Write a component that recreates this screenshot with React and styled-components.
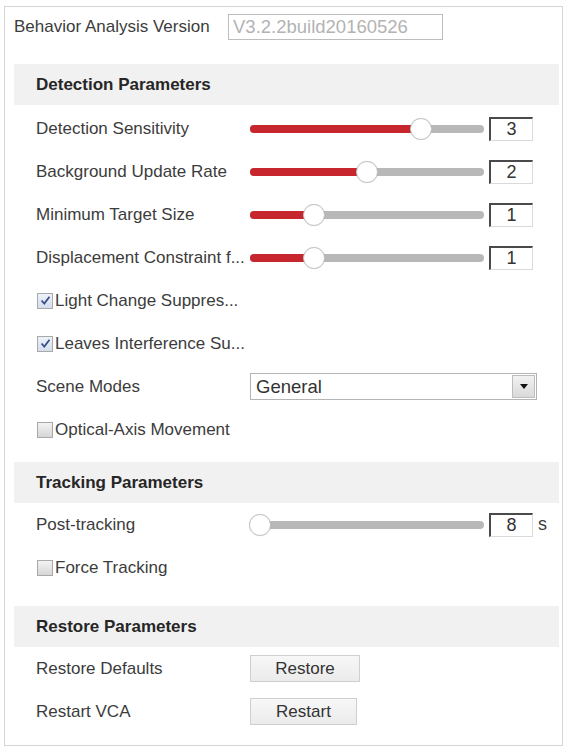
import React from "react";
import styled, { createGlobalStyle } from "styled-components";

const GlobalStyle = createGlobalStyle`
  html, body {
    margin: 0;
    padding: 0;
    background: #ffffff;
  }
  body {
    font-family: "Liberation Sans", Arial, sans-serif;
    color: #3c3c3c;
  }
`;

const Panel = styled.div`
  margin: 6px 0 0 4px;
  width: 545px;
  height: 738px;
  border: 1px solid #d6d6d6;
  padding-left: 9px;
  padding-right: 3px;
  display: flex;
  flex-direction: column;
`;

/* Version */

const VersionRow = styled.div`
  display: flex;
  align-items: center;
  height: 26px;
  margin-top: 7px;
`;

const VersionLabel = styled.span`
  font-size: 17px;
  width: 214px;
`;

const VersionInput = styled.div`
  width: 209px;
  height: 24px;
  border: 1px solid #bdbdbd;
  padding-left: 4px;
  font-size: 18.5px;
  line-height: 24px;
  color: #b3b3b3;
`;

/* Sections */

const Section = styled.section`
  margin-top: ${(p) => p.$top}px;
  display: flex;
  flex-direction: column;
`;

const SectionHeader = styled.h3`
  margin: 0;
  height: 41px;
  background: #f1f1f1;
  padding-left: 22px;
  display: flex;
  align-items: center;
  font-size: 17px;
  font-weight: bold;
  color: #262626;
`;

const Rows = styled.div`
  margin-top: ${(p) => p.$top || 0}px;
  display: flex;
  flex-direction: column;
`;

const Row = styled.div`
  height: 43px;
  display: flex;
  align-items: center;
  padding-left: 22px;
  font-size: 17px;
`;

const Label = styled.span`
  width: 214px;
  flex-shrink: 0;
  white-space: nowrap;
  overflow: hidden;
`;

/* Slider */

const Track = styled.div`
  position: relative;
  width: 234px;
  height: 8px;
  border-radius: 4px;
  background: #b8b8b8;
`;

const Fill = styled.div`
  height: 100%;
  border-radius: 4px 0 0 4px;
  background: #c7262f;
`;

const Thumb = styled.div`
  position: absolute;
  top: 50%;
  width: 20px;
  height: 20px;
  margin: -11px 0 0 -11px;
  border-radius: 50%;
  background: #ffffff;
  border: 1px solid #c4c4c4;
  box-shadow: 0 0 1px rgba(0, 0, 0, 0.15);
`;

const NumberBox = styled.div`
  margin-left: 5px;
  width: 41px;
  height: 21px;
  border: 1px solid #dadada;
  border-top: 2px solid #4a4a4a;
  border-left: 2px solid #4a4a4a;
  font-size: 18px;
  line-height: 21px;
  text-align: center;
  color: #333;
`;

const Unit = styled.span`
  margin-left: 5px;
  font-size: 18px;
`;

const Slider = ({ label, value, frac, unit }) => {
  const pos = 10 + frac * 214;
  return (
    <Row>
      <Label>{label}</Label>
      <Track>
        <Fill style={{ width: pos }} />
        <Thumb style={{ left: pos }} />
      </Track>
      <NumberBox>{value}</NumberBox>
      {unit && <Unit>{unit}</Unit>}
    </Row>
  );
};

/* Checkbox */

const Box = styled.span`
  width: 14px;
  height: 14px;
  margin-left: 1px;
  margin-right: 2px;
  border: 1px solid #a9a9a9;
  background: ${(p) =>
    p.$checked
      ? "linear-gradient(#eef2fa, #d5ddec)"
      : "linear-gradient(#f3f3f3, #d6d6d6)"};
  display: flex;
  align-items: center;
  justify-content: center;
  flex-shrink: 0;
`;

const CheckLabel = styled.span`
  white-space: nowrap;
`;

const Check = ({ label, checked }) => (
  <Row>
    <Box $checked={checked}>
      {checked && (
        <svg width="11" height="11" viewBox="0 0 11 11">
          <path
            d="M1.5 5.5 L4.3 8.5 L9.5 1.8"
            fill="none"
            stroke="#37508a"
            strokeWidth="1.8"
          />
        </svg>
      )}
    </Box>
    <CheckLabel>{label}</CheckLabel>
  </Row>
);

/* Select */

const SelectBox = styled.div`
  width: 285px;
  height: 25px;
  border: 1px solid #b4b4b4;
  display: flex;
  align-items: center;
  font-size: 18.5px;
  color: #333;
`;

const SelectText = styled.span`
  flex: 1;
  padding-left: 5px;
`;

const SelectButton = styled.span`
  width: 21px;
  height: 21px;
  margin-right: 1px;
  border: 1px solid #bdbdbd;
  background: linear-gradient(#f2f2f2, #d9d9d9);
  display: flex;
  align-items: center;
  justify-content: center;
`;

/* Buttons */

const Button = styled.button`
  width: ${(p) => p.$w}px;
  height: 27px;
  border: 1px solid #cfcfcf;
  background: linear-gradient(#f7f7f7, #ebebeb);
  font-family: "Liberation Sans", Arial, sans-serif;
  font-size: 17px;
  color: #333;
  padding: 0;
`;

const App = () => (
  <>
    <GlobalStyle />
    <Panel>
      <VersionRow>
        <VersionLabel>Behavior Analysis Version</VersionLabel>
        <VersionInput>V3.2.2build20160526</VersionInput>
      </VersionRow>

      <Section $top={24}>
        <SectionHeader>Detection Parameters</SectionHeader>
        <Rows $top={2}>
          <Slider label="Detection Sensitivity" value="3" frac={0.75} />
          <Slider label="Background Update Rate" value="2" frac={0.5} />
          <Slider label="Minimum Target Size" value="1" frac={0.25} />
          <Slider label="Displacement Constraint f..." value="1" frac={0.25} />
          <Check label="Light Change Suppres..." checked />
          <Check label="Leaves Interference Su..." checked />
          <Row>
            <Label>Scene Modes</Label>
            <SelectBox>
              <SelectText>General</SelectText>
              <SelectButton>
                <svg width="8" height="5" viewBox="0 0 8 5">
                  <path d="M0 0 H8 L4 5 Z" fill="#111" />
                </svg>
              </SelectButton>
            </SelectBox>
          </Row>
          <Check label="Optical-Axis Movement" />
        </Rows>
      </Section>

      <Section $top={11}>
        <SectionHeader>Tracking Parameters</SectionHeader>
        <Rows>
          <Slider label="Post-tracking" value="8" frac={0} unit="s" />
          <Check label="Force Tracking" />
        </Rows>
      </Section>

      <Section $top={17}>
        <SectionHeader>Restore Parameters</SectionHeader>
        <Rows>
          <Row>
            <Label>Restore Defaults</Label>
            <Button $w={110}>Restore</Button>
          </Row>
          <Row>
            <Label>Restart VCA</Label>
            <Button $w={107}>Restart</Button>
          </Row>
        </Rows>
      </Section>
    </Panel>
  </>
);

export default App;
